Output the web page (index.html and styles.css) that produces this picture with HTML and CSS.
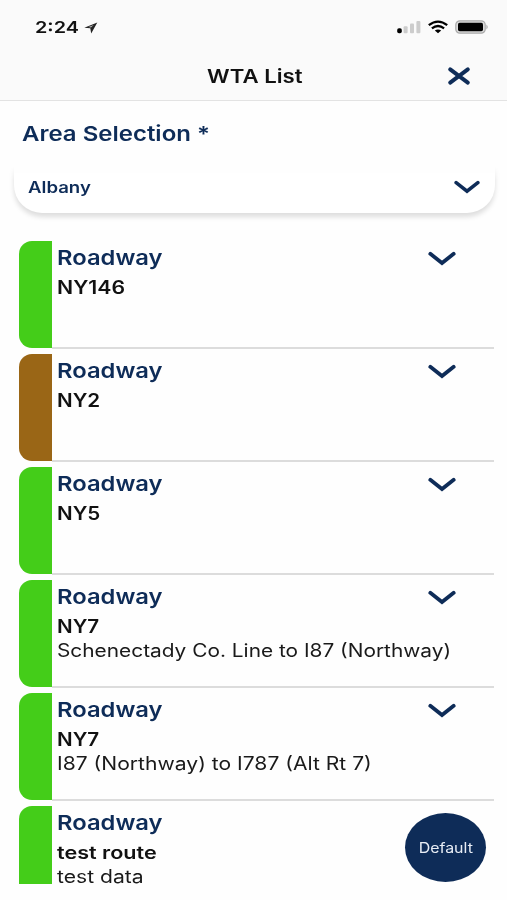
FILE: index.html
```html
<!DOCTYPE html>
<html lang="en">
<head>
<meta charset="utf-8">
<title>WTA List</title>
<link rel="stylesheet" href="styles.css">
</head>
<body>
<svg class="defs" width="0" height="0" aria-hidden="true">
  <symbol id="chevron" viewBox="0 0 28 16"><path d="M2.3 2.8 14 12 25.7 2.8" fill="none" stroke="currentColor" stroke-width="3.8" stroke-linecap="round" stroke-linejoin="miter"/></symbol>
</svg>
<div class="screen">
  <header class="header">
    <div class="status">
      <span class="text time">2:24</span>
      <svg class="locate" width="14" height="12" viewBox="0 0 14 12"><path d="M13.3.4.3 5.8l6 .5.9 5.3z" fill="#222"/><path d="M9.8 2.9 4.4 5l2.5.5z" fill="#bbb"/></svg>
      <div class="indicators">
        <svg width="24" height="14" viewBox="0 0 24 14"><rect x=".2" y="8.2" width="4.6" height="5" rx="1.8" fill="#000"/><g fill="#ccc"><rect x="6.6" y="6.2" width="4" height="7" rx="1"/><rect x="13" y="3.6" width="4" height="9.6" rx="1"/><rect x="19.4" y="1" width="4" height="12.2" rx="1"/></g></svg>
        <svg width="20" height="14" viewBox="0 0 20 14"><g fill="none" stroke="#000" stroke-width="2.3"><path d="M.8 5.2Q10-2 19.2 5.2"/><path d="M3.9 8.3Q10 3.6 16.1 8.3"/></g><path d="M6.8 10.6Q10 8.2 13.2 10.6L10 13.2z" fill="#000"/></svg>
        <svg width="34" height="14" viewBox="0 0 34 14"><rect x=".8" y=".8" width="29.4" height="12.4" rx="4" fill="#ddd" stroke="#aaa" stroke-width="1.2"/><rect x="3" y="2.8" width="25" height="8.4" rx="1.6" fill="#000"/><path d="M31.5 4.5q2.2 2.5 0 5z" fill="#999"/></svg>
      </div>
    </div>
    <div class="titlebar">
      <h1 class="text title">WTA List</h1>
      <button class="close" aria-label="Close"><svg width="24" height="20" viewBox="0 0 24 20"><path d="M3.2 3.4 20.8 16.6M20.8 3.4 3.2 16.6" stroke="currentColor" stroke-width="4" stroke-linecap="round"/></svg></button>
    </div>
  </header>
  <main class="main">
    <h2 class="label"><span class="text area">Area Selection *</span></h2>
    <div class="select-clip">
      <div class="select"><span class="text value">Albany</span><svg width="26" height="15"><use href="#chevron"/></svg></div>
    </div>
    <div class="list">
      <article class="row"><div class="swatch green"></div><div class="body"><div class="head"><h3 class="text name">Roadway</h3><svg width="28" height="16"><use href="#chevron"/></svg></div><p class="text route">NY146</p></div></article>
      <article class="row"><div class="swatch brown"></div><div class="body"><div class="head"><h3 class="text name">Roadway</h3><svg width="28" height="16"><use href="#chevron"/></svg></div><p class="text route short">NY2</p></div></article>
      <article class="row"><div class="swatch green"></div><div class="body"><div class="head"><h3 class="text name">Roadway</h3><svg width="28" height="16"><use href="#chevron"/></svg></div><p class="text route short">NY5</p></div></article>
      <article class="row"><div class="swatch green"></div><div class="body"><div class="head"><h3 class="text name">Roadway</h3><svg width="28" height="16"><use href="#chevron"/></svg></div><p class="text route short">NY7</p><p class="text detail">Schenectady Co. Line to I87 (Northway)</p></div></article>
      <article class="row"><div class="swatch green"></div><div class="body"><div class="head"><h3 class="text name">Roadway</h3><svg width="28" height="16"><use href="#chevron"/></svg></div><p class="text route short">NY7</p><p class="text detail wide">I87 (Northway) to I787 (Alt Rt 7)</p></div></article>
      <article class="row last"><div class="swatch green"></div><div class="body"><div class="head"><h3 class="text name">Roadway</h3></div><p class="text route lower">test route</p><p class="text detail wide">test data</p></div></article>
    </div>
  </main>
  <button class="default"><span class="text">Default</span></button>
</div>
</body>
</html>
```

FILE: styles.css
```css
* { box-sizing: border-box; margin: 0; padding: 0; }
body { font-family: Inter, "Liberation Sans", sans-serif; background: #fefefe; color: #111; }
svg { display: block; flex: none; }
button { border: 0; background: none; font: inherit; }
.defs { position: absolute; }
.screen { position: relative; height: 900px; overflow: hidden; --navy: #0e2c58; }
.text { display: block; width: max-content; white-space: nowrap; transform: scaleX(1.2); transform-origin: left center; }

.header { height: 101px; background: #fafafa; border-bottom: 1px solid #e3e3e3; }
.status { display: flex; align-items: center; height: 54px; padding: 0 18px 0 35px; }
.time { width: 49px; font-size: 16.5px; font-weight: 600; }
.locate { margin-top: 1px; }
.indicators { display: flex; gap: 7px; margin-left: auto; }
.titlebar { display: grid; grid-template-columns: 1fr auto 1fr; align-items: center; height: 44px; padding-left: 2px; }
.title { grid-column: 2; font-size: 18.5px; font-weight: 600; transform-origin: center; }
.close { justify-self: end; margin-right: 36px; color: var(--navy); }

.main { color: var(--navy); }
.label { display: flex; align-items: center; height: 64px; padding-left: 22px; }
.area { font-size: 20.5px; font-weight: 600; transform: scaleX(1.17); }
.select-clip { height: 64px; margin-bottom: 12px; overflow: hidden; mask-image: linear-gradient(transparent 2px, #000 15px); }
.select { display: flex; align-items: center; justify-content: space-between; height: 76px; margin: -28px 12px 0 14px; padding: 24px 15px 0 14px; border-radius: 0 0 28px 28px; background: #fff; box-shadow: 0 4px 5px rgba(0, 0, 0, .13); }
.value { font-size: 15.5px; font-weight: 600; }

.list { height: 647px; padding: 0 13px 0 19px; }
.row { display: flex; height: 108px; margin-bottom: 5px; }
.swatch { width: 33px; height: 107px; border-radius: 13px 0 0 13px; }
.green { background: #44cd19; }
.brown { background: #9a6616; }
.last { height: 82px; margin: 0; }
.last .swatch { height: 78px; border-radius: 13px 0 0; }
.body { flex: 1; padding: 3px 0 0 5px; border-bottom: 2px solid #dcdcdc; }
.last .body { border: 0; }
.head { display: flex; justify-content: space-between; align-items: center; height: 26px; padding-right: 38px; }
.head svg { margin-top: 3px; }
.name { font-size: 20.5px; font-weight: 600; transform: scaleX(1.16); }
.route { height: 24px; margin-top: 6px; font-size: 18px; font-weight: 600; line-height: 24px; color: #111; transform: scaleX(1.18); }
.short { transform: scaleX(1.145); }
.lower { transform: scaleX(1.2); }
.detail { height: 24px; font-size: 18px; line-height: 24px; color: #1a1a1a; transform: scaleX(1.158); }
.wide { transform: scaleX(1.172); }

.default { position: absolute; left: 405px; top: 813px; display: grid; place-items: center; width: 81px; height: 69px; border-radius: 50%; background: var(--navy); color: #e8edf5; font-size: 14px; }
.default .text { transform: scaleX(1.14); transform-origin: center; }
```
